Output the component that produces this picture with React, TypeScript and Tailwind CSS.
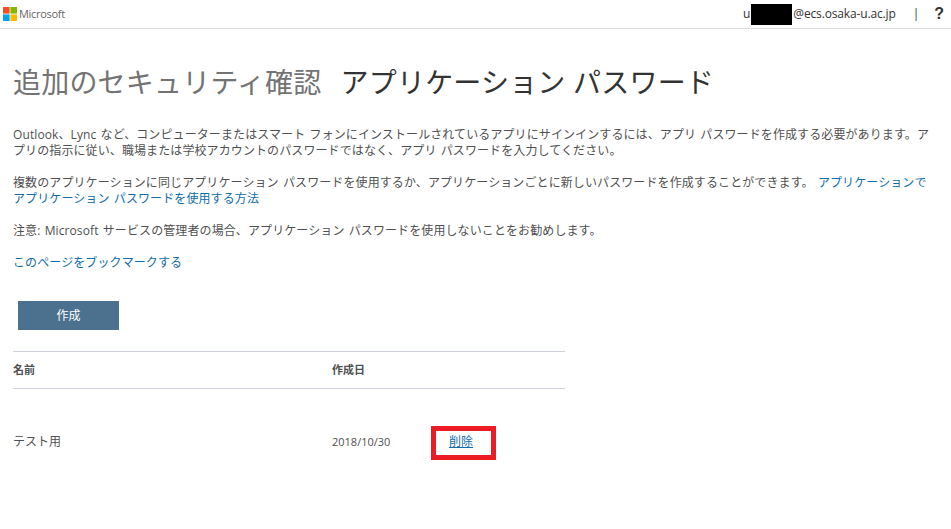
function MsLogo() {
  return (
    <svg width="14" height="14" viewBox="0 0 14 14">
      <rect x="0" y="0" width="6.6" height="6.6" fill="#f25022" />
      <rect x="7.4" y="0" width="6.6" height="6.6" fill="#7fba00" />
      <rect x="0" y="7.4" width="6.6" height="6.6" fill="#00a4ef" />
      <rect x="7.4" y="7.4" width="6.6" height="6.6" fill="#ffb900" />
    </svg>
  );
}

export default function App() {
  return (
    <div className="h-[529px] w-[951px] overflow-hidden bg-white font-['Open_Sans','Noto_Sans_CJK_JP',sans-serif] text-[#505050]">
      <header className="flex h-[29px] items-center justify-between border-b border-[#dcdcdc] pl-[3px] pr-[7px]">
        <div className="flex items-center gap-[2px]">
          <MsLogo />
          <span className="text-[11px] tracking-[-0.3px] text-[#666]">Microsoft</span>
        </div>
        <div className="flex items-center">
          <span className="flex items-center text-xs tracking-[-0.15px] text-[#333]">
            u<span className="mx-[1px] inline-block h-[21px] w-[41px] bg-black" />@ecs.osaka-u.ac.jp
          </span>
          <span className="ml-[17px] text-xs text-[#333]">|</span>
          <span className="ml-[15px] font-['Liberation_Sans'] text-base font-bold text-[#333]">?</span>
        </div>
      </header>

      <main className="pl-[13px] pr-[21px]">
        <h1 className="mt-[35px] flex gap-[19px] text-[28px] leading-[36px] font-normal tracking-[0.2px]">
          <span className="text-[#737373]">追加のセキュリティ確認</span>
          <span className="text-[#333]">アプリケーション パスワード</span>
        </h1>

        <div className="mt-[27px] text-xs leading-[16px] tracking-[0.1px] [word-spacing:1px]">
          <p>Outlook、Lync など、コンピューターまたはスマート フォンにインストールされているアプリにサインインするには、アプリ パスワードを作成する必要があります。アプリの指示に従い、職場または学校アカウントのパスワードではなく、アプリ パスワードを入力してください。</p>
          <p className="mt-[16px]">
            複数のアプリケーションに同じアプリケーション パスワードを使用するか、アプリケーションごとに新しいパスワードを作成することができます。{" "}
            <a href="#" className="text-[#0f6ca8]">アプリケーションでアプリケーション パスワードを使用する方法</a>
          </p>
          <p className="mt-[16px]">注意: Microsoft サービスの管理者の場合、アプリケーション パスワードを使用しないことをお勧めします。</p>
          <p className="mt-[16px]"><a href="#" className="text-[#0f6ca8]">このページをブックマークする</a></p>
        </div>

        <button className="mt-[30px] ml-[5px] block h-[29px] w-[101px] bg-[#4b718e] text-xs text-white">作成</button>

        <div className="mt-[21px] w-[552px] text-[11px]">
          <div className="flex h-[38px] items-center border-y border-[#ccd2d8] font-bold">
            <span className="w-[319px]">名前</span>
            <span>作成日</span>
          </div>
          <div className="mt-[37px] flex items-center">
            <span className="w-[319px] pb-[2px] text-xs">テスト用</span>
            <span className="w-[99px] pb-[2px] text-[11px]">2018/10/30</span>
            <span className="flex h-[34px] w-[65px] items-center border-[5px] border-[#ed1c24] pb-[2px] pl-[13px] text-xs">
              <a href="#" className="text-[#0f6ca8] underline">削除</a>
            </span>
          </div>
        </div>
      </main>
    </div>
  );
}
